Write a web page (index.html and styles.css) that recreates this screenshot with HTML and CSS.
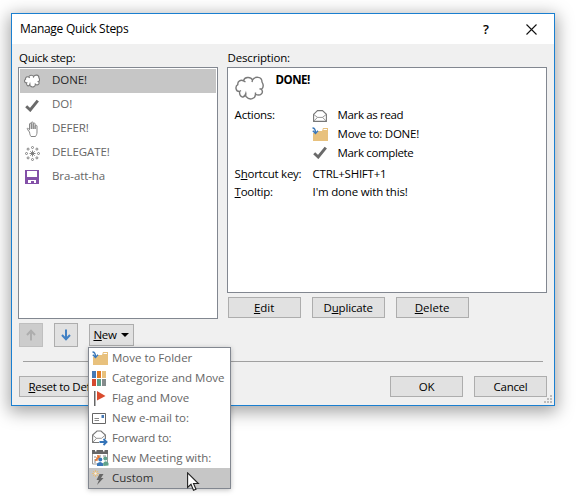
FILE: index.html
```html
<!DOCTYPE html>
<html lang="en">
<head>
<meta charset="utf-8">
<title>Manage Quick Steps</title>
<link rel="stylesheet" href="styles.css">
</head>
<body>
<svg class="defs" width="0" height="0">
  <defs>
    <symbol id="cloud" viewBox="0 0 29 24">
      <path d="M8.500 4.800C9.500.8 15.500.3 17.500 4C19.500.3 27 0 27 6C28.500 8.500 28.500 11.500 26.500 13.300C29 17 25.500 20.500 20.500 18.300C20.500 22.500 15 25 11 20.500C10.300 19.500 11 18.500 10.800 17.500C9 23 4.500 21.500 4.500 15.500C.3 15.500 0 10 2.800 8.700C2.300 5 6 3.300 8.500 4.800L10.500 6M17.500 4L17 6M26.500 13.300L24.500 12.800M20.500 18.300L20.500 16.500M4.500 15.500L6 14.500"/>
    </symbol>
    <symbol id="check" viewBox="0 0 14 13">
      <path d="M1.200 7.200L5.200 11L12.800 1.600" fill="none" stroke="#6a6a6a" stroke-width="2.900"/>
    </symbol>
    <symbol id="folder" viewBox="0 0 17 14">
      <path d="M2 6H5L6 4H10L11 1H16V14H1V6Z" fill="#e8c17d"/>
      <path d="M11.500 2.500H15" stroke="#fff" stroke-width="1"/>
      <path d="M.5 1C2.500 1 3.500 2 3.500 6M.8 3.700L3.500 6.400L6 3.700" fill="none" stroke="#3a77b8" stroke-width="1.400"/>
    </symbol>
    <symbol id="openmail" viewBox="0 0 14 12">
      <path d="M.6 4.300L4.500.6H9.500L13.400 4.300V11.400H.6Z" fill="#fff" stroke="#777" stroke-width="1.100"/>
      <path d="M.8 4.500L4.500 7.400H9.500L13.200 4.500M.8 11L4.500 7.400M13.200 11L9.500 7.400" fill="none" stroke="#8a8a8a" stroke-width=".9"/>
    </symbol>
  </defs>
</svg>
<main class="dialog">
  <header class="titlebar">
    <h1 class="title">Manage Quick Steps</h1>
    <span class="help">?</span>
    <svg class="close" width="11" height="11" viewBox="0 0 11 11"><path d="M.5.5L10.500 10.500M10.500.5L.5 10.500" stroke="#111" stroke-width="1.100"/></svg>
  </header>
  <div class="content">
    <div class="columns">
      <section class="left">
        <div class="label snug">Quick step:</div>
        <ul class="list">
          <li class="row selected"><svg class="icon cloud" width="16" height="14"><use href="#cloud"/></svg><span>DONE!</span></li>
          <li class="row"><svg class="icon" width="14" height="13"><use href="#check"/></svg><span>DO!</span></li>
          <li class="row"><svg class="icon" width="13" height="17" viewBox="0 0 13 17"><path d="M3.500 11L1.500 8.500C.8 7.500 1.200 7 2.200 7.500L3.500 8.800V3C3.500 2 5.300 2 5.300 3V8V1.800C5.300.7 7.200.7 7.200 1.800V8V2.800C7.200 1.800 9.100 1.800 9.100 2.800V8V5C9.100 4 11 4 11 5V11C11 13 10.500 14 9.500 15.500H5C4 14 3.800 13 3.500 11" fill="#fff" stroke="#858585"/></svg><span>DEFER!</span></li>
          <li class="row"><svg class="icon" width="15" height="15" viewBox="0 0 15 15"><g fill="none" stroke="#777" stroke-width=".9"><path d="M7.500 4.500V10.500M4.500 7.500H10.500M5.300 5.300L9.700 9.700M9.700 5.300L5.300 9.700"/><circle cx="7.500" cy="1.500" r="1"/><circle cx="11.900" cy="3.100" r="1"/><circle cx="13.500" cy="7.500" r="1"/><circle cx="11.900" cy="11.900" r="1"/><circle cx="7.500" cy="13.500" r="1"/><circle cx="3.100" cy="11.900" r="1"/><circle cx="1.500" cy="7.500" r="1"/><circle cx="3.100" cy="3.100" r="1"/></g></svg><span>DELEGATE!</span></li>
          <li class="row"><svg class="icon" width="14" height="14" viewBox="0 0 14 14"><path d="M0 0H14V14H0Z" fill="#8350a8"/><path d="M2 1H12V7H2ZM3 10H11V13H9V11H6V13H3Z" fill="#fff"/></svg><span>Bra-att-ha</span></li>
        </ul>
        <div class="tools">
          <button class="btn square disabled" aria-label="Move up"><svg width="10" height="12" viewBox="0 0 10 12"><path d="M5 11.500V1.500M1 6L5 1.800L9 6" fill="none" stroke="#adadad" stroke-width="2"/></svg></button>
          <button class="btn square" aria-label="Move down"><svg width="10" height="12" viewBox="0 0 10 12"><path d="M5 .5V10.500M1 6L5 10.200L9 6" fill="none" stroke="#4080c4" stroke-width="2"/></svg></button>
          <div class="new-wrap">
            <button class="btn new"><span class="snug"><u>N</u>ew</span><i class="caret"></i></button>
            <ul class="menu">
              <li class="item"><svg class="mi" width="17" height="14"><use href="#folder"/></svg><span>Move to Folder</span></li>
              <li class="item"><svg class="mi" width="15" height="15" viewBox="0 0 15 15"><path d="M0 0H4V7H0Z" fill="#4579b5"/><path d="M5 0H9V7H5Z" fill="#e27a24"/><path d="M10 0H14V7H10Z" fill="#e8c17d"/><path d="M0 8H4V15H0Z" fill="#d4492f"/><path d="M5 8H9V15H5Z" fill="#5da08b"/><path d="M10 8H14V15H10Z" fill="#858c8c"/></svg><span>Categorize and Move</span></li>
              <li class="item"><svg class="mi" width="15" height="15" viewBox="0 0 15 15"><path d="M2 0H3.500V15H2Z" fill="#666"/><path d="M5 0L13.500 5L5 9.500Z" fill="#d94b2d"/></svg><span>Flag and Move</span></li>
              <li class="item"><svg class="mi" width="15" height="11" viewBox="0 0 15 11"><path d="M.5.5H13.500V10.500H.5Z" fill="#fff" stroke="#666"/><path d="M2.500 5.500H7M2.500 7.500H7" stroke="#888"/><path d="M9.500 2H12V5H9.500Z" fill="#4579b5"/></svg><span>New e-mail to:</span></li>
              <li class="item"><svg class="mi" width="16" height="16" viewBox="0 0 16 16"><path d="M7 12.500H.6V5L5 1H9L13.400 5V9" fill="none" stroke="#777" stroke-width="1.100"/><path d="M.8 5.200L4.500 8.300H9.500L13.200 5.200M.8 12.300L4.500 8.300" fill="none" stroke="#8a8a8a" stroke-width=".9"/><path d="M7.500 12H14M11.500 9L14.500 12L11.500 15" fill="none" stroke="#3574b8" stroke-width="1.900"/></svg><span class="forward">Forward to:</span></li>
              <li class="item"><svg class="mi meet" width="17" height="16" viewBox="0 0 17 16"><path d="M.5 2H15.500V14H.5Z" fill="#fff" stroke="#999"/><path d="M0 0H16V4H0Z" fill="#666"/><path d="M3 0H4.500V1.500H3ZM11 0H12.500V1.500H11Z" fill="#fff"/><path d="M2 7H4M2 10H4M2 12H4M8 6H9M11 6H14" stroke="#888" stroke-width="1.200"/><path d="M5 6H7V8H5V10H3" fill="none" stroke="#e07028" stroke-width="1.500"/><circle cx="8.300" cy="9.500" r="2" fill="#3977b9"/><path d="M5 16V13.500Q8.300 10.500 11 13.500V16Z" fill="#3977b9"/><circle cx="13.300" cy="8.500" r="2" fill="#5fa28b"/><path d="M11.300 16V13Q13.500 9.500 16.500 13V15.500Z" fill="#5fa28b"/></svg><span>New Meeting with:</span></li>
              <li class="item selected"><svg class="mi" width="16" height="16" viewBox="0 0 16 16"><path d="M3.500 0V7M0 3.500H7M1 1L6 6M6 1L1 6" stroke="#e8bd78"/><circle cx="3.500" cy="3.500" r="1.200" fill="#eee"/><path d="M7.500 4H11.500L9 8H11.500L5 15L7 10H4.500Z" fill="#666"/></svg><span>Custom</span></li>
            </ul>
            <svg class="cursor" width="13" height="20" viewBox="0 0 13 20"><path d="M.6.9V15.500L4 12.300L6.500 18.300L9 17.200L6.500 11.500H11.400Z" fill="#fff" stroke="#222" stroke-width="1.100"/></svg>
          </div>
        </div>
      </section>
      <section class="right">
        <div class="label">Description:</div>
        <div class="details">
          <div class="head"><svg class="bigcloud cloud" width="29" height="24"><use href="#cloud"/></svg><strong class="name">DONE!</strong></div>
          <div class="pair"><span class="k">Actions:</span><svg class="ai" width="14" height="12"><use href="#openmail"/></svg><span class="tight">Mark as read</span></div>
          <div class="pair"><span class="k"></span><svg class="ai fold" width="17" height="14"><use href="#folder"/></svg><span>Move to: DONE!</span></div>
          <div class="pair"><span class="k"></span><svg class="ai tick" width="14" height="13"><use href="#check"/></svg><span class="tight">Mark complete</span></div>
          <div class="pair shortcut"><span class="k">S<u>h</u>ortcut key:</span><span>CTRL+SHIFT+1</span></div>
          <div class="pair tip"><span class="k"><u>T</u>ooltip:</span><span class="phrase">I'm done with this!</span></div>
        </div>
        <div class="edit-buttons">
          <button class="btn"><span><u>E</u>dit</span></button>
          <button class="btn"><span class="duplicate">D<u>u</u>plicate</span></button>
          <button class="btn"><span><u>D</u>elete</span></button>
        </div>
      </section>
    </div>
    <hr class="rule">
    <footer class="footer">
      <button class="btn reset"><span class="snug"><u>R</u>eset to Defaults</span></button>
      <button class="btn"><span class="snug">OK</span></button>
      <button class="btn"><span class="snug">Cancel</span></button>
    </footer>
  </div>
  <svg class="grip" width="8" height="8" viewBox="0 0 8 8"><path d="M6 0H8V2H6ZM3 3H5V5H3ZM6 3H8V5H6ZM0 6H2V8H0ZM3 6H5V8H3ZM6 6H8V8H6Z" fill="#bcbcbc"/></svg>
</main>
</body>
</html>
```
FILE: styles.css
```css
* { box-sizing: border-box; }
body { margin: 0; padding: 13px 0 0 11px; height: 502px; overflow: hidden; background: #fff; color: #000; font: 11.5px/16px "Open Sans", "Noto Sans", sans-serif; white-space: nowrap; }
.defs { display: block; }
ul { margin: 0; padding: 0; list-style: none; }
svg { flex: none; }
u { text-decoration: underline; text-decoration-thickness: 1px; text-underline-offset: 1px; text-decoration-skip-ink: none; }

.dialog { position: relative; width: 544px; height: 393px; border: 1px solid #1a7fd0; background: #f0f0f0; box-shadow: 0 4px 16px 2px rgba(0, 0, 0, .36); }
.titlebar { display: flex; align-items: center; height: 30px; padding: 0 17px 0 8px; background: #fff; }
.title { flex: 1; margin: 0; font-size: 12px; font-weight: 400; letter-spacing: -.28px; }
.help { margin-right: 37px; font-size: 13px; font-weight: 600; }
.content { padding: 6px 7px 0 6px; }
.columns { display: flex; gap: 9px; height: 297px; }
.left { width: 200px; }
.right { width: 321px; }
.label { height: 17px; padding-left: 1px; letter-spacing: -.18px; }
.snug, .label.snug { letter-spacing: -.3px; }

.list { height: 252px; padding: 1px; border: 1px solid #828790; background: #fff; }
.row { display: grid; grid-template-columns: 16px 1fr; column-gap: 12px; align-items: center; height: 24px; padding-left: 4px; color: #666; letter-spacing: -.08px; }
.row > span { margin-top: -2px; }
.icon { justify-self: center; }
.selected { background: #c6c6c6; color: #262626; }
.cloud { fill: #fff; stroke: #7a7a7a; stroke-width: 1.4; }
.row .cloud { stroke-width: 2; }

.btn { display: flex; align-items: center; justify-content: center; width: 73px; height: 21px; padding: 0; border: 1px solid #adadad; background: #e1e1e1; color: #000; font: inherit; white-space: nowrap; }
.btn.square { width: 24px; height: 24px; }
.btn.disabled { background: #ccc; border-color: #bfbfbf; }
.tools { display: flex; gap: 11px; padding: 4px 0 0 1px; }
.new-wrap { position: relative; padding-top: 1px; }
.btn.new { width: 45px; height: 22px; gap: 4px; padding-right: 1px; }
.caret { border: 4px solid transparent; border-top-color: #000; border-bottom: 0; }

.menu { position: absolute; z-index: 2; left: -1px; top: 24px; width: 143px; height: 142px; border: 1px solid #828790; background: #fff; box-shadow: 0 1px 5px rgba(0, 0, 0, .25); }
.item { display: grid; grid-template-columns: 17px 1fr; column-gap: 4px; align-items: center; height: 20px; padding-left: 2px; color: #666; letter-spacing: -.01px; }
.item.selected { color: #333; }
.mi { margin-left: 1px; }
.forward { letter-spacing: -.2px; }
.cursor { position: absolute; z-index: 3; left: 98px; top: 149px; }

.details { height: 226px; padding: 4px 6px; border: 1px solid #828790; background: #fff; }
.head { display: flex; height: 34px; }
.bigcloud { margin: 4px 12px 0 1px; }
.name { letter-spacing: -.5px; }
.pair { display: flex; align-items: center; height: 19px; padding-left: 1px; letter-spacing: -.25px; }
.pair > span { padding-bottom: 2px; }
.k { width: 78px; }
.ai { margin-right: 11px; }
.ai.fold { margin: -2px 9px 0 -1px; }
.ai.tick { margin-top: -2px; }
.tight { letter-spacing: -.36px; }
.phrase { letter-spacing: -.18px; }
.shortcut { height: 20px; margin-top: 2px; }
.tip { height: 16px; }
.edit-buttons { display: flex; gap: 11px; padding: 4px 0 0 1px; }
.duplicate { letter-spacing: -.15px; }

.rule { height: 1px; margin: 14px 4px 0 5px; border: 0; background: #a0a0a0; }
.footer { display: flex; gap: 11px; padding: 14px 0 0 1px; }
.reset { width: 105px; margin-right: auto; }
.grip { position: absolute; right: 2px; bottom: 2px; }
```
